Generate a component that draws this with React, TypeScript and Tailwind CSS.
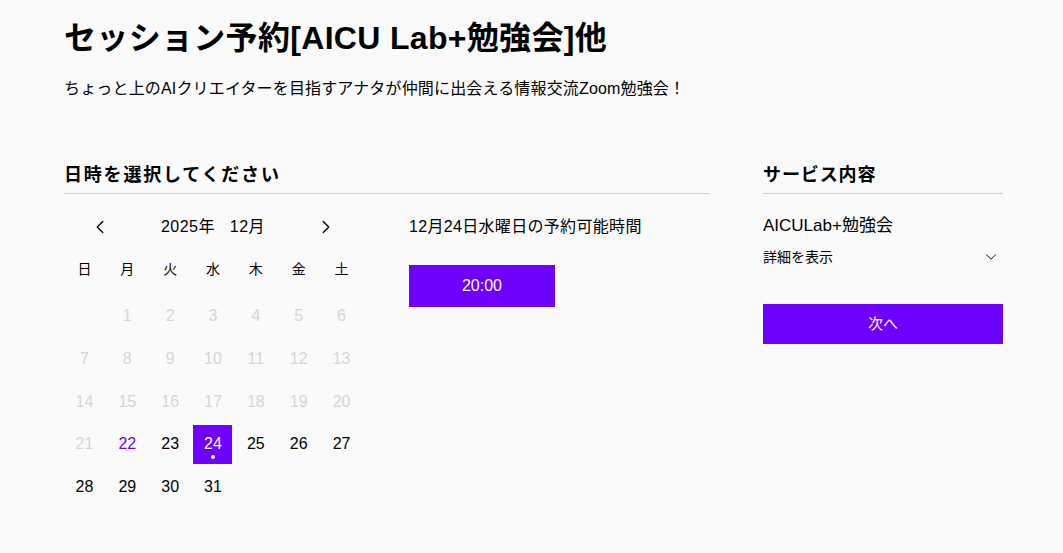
import React from 'react';
import { ChevronLeft, ChevronRight, ChevronDown } from 'lucide-react';

const font = { fontFamily: '"Liberation Sans", "Noto Sans CJK JP", sans-serif' };

const weekdays = ['日', '月', '火', '水', '木', '金', '土'];

type Day = { n: number | null; state: 'past' | 'open' | 'today' | 'selected' | 'empty' };

const buildDays = (): Day[] => {
  const days: Day[] = [{ n: null, state: 'empty' }];
  for (let i = 1; i <= 31; i++) {
    let state: Day['state'] = 'past';
    if (i === 22) state = 'today';
    else if (i === 24) state = 'selected';
    else if (i > 22) state = 'open';
    days.push({ n: i, state });
  }
  return days;
};

const DayCell: React.FC<{ day: Day }> = ({ day }) => {
  if (day.n === null) return <div className="h-[39px]" />;
  if (day.state === 'selected') {
    return (
      <div className="flex justify-center">
        <div className="relative flex h-[39px] w-[39px] items-center justify-center bg-[#6f00ff] text-white">
          {day.n}
          <span className="absolute bottom-[5px] left-1/2 h-[4px] w-[4px] -translate-x-1/2 rounded-full bg-white" />
        </div>
      </div>
    );
  }
  const color =
    day.state === 'past' ? 'text-[#d4d4d4]' : day.state === 'today' ? 'text-[#6f00ff]' : 'text-black';
  return <div className={`flex h-[39px] items-center justify-center ${color}`}>{day.n}</div>;
};

export default function App() {
  const days = buildDays();
  return (
    <div className="min-h-[553px] w-full bg-[#fafafa] text-black" style={font}>
      <div className="pl-16 pt-[18px]">
        <h1 className="text-[32px] font-bold leading-[40px] tracking-[0.01em]">セッション予約[AICU Lab+勉強会]他</h1>
        <p className="mt-[20px] text-[16px] leading-[22px] tracking-[0.01em]">
          ちょっと上のAIクリエイターを目指すアナタが仲間に出会える情報交流Zoom勉強会！
        </p>

        <div className="mt-[63px] flex gap-[53px]">
          {/* left: date/time */}
          <section className="w-[646px] shrink-0">
            <h2 className="pb-[6px] text-[18px] font-bold leading-[24px] tracking-[0.1em]">日時を選択してください</h2>
            <div className="h-px bg-[#cfcfcf]" />

            <div className="mt-[20px] flex">
              <div className="-ml-px w-[300px] shrink-0">
                <div className="flex h-[26px] items-center justify-between pl-[26px] pr-[26px] text-[16px]">
                  <ChevronLeft className="h-[22px] w-[22px]" strokeWidth={1.5} />
                  <span className="tracking-[0.03em]">2025年&nbsp;&nbsp;&nbsp;12月</span>
                  <ChevronRight className="h-[22px] w-[22px]" strokeWidth={1.5} />
                </div>
                <div className="mt-[19px] grid grid-cols-7 text-[14px]">
                  {weekdays.map((w) => (
                    <div key={w} className="flex h-[20px] items-center justify-center">
                      {w}
                    </div>
                  ))}
                </div>
                <div className="mt-[17.5px] grid grid-cols-7 gap-y-[3.75px] text-[16px]">
                  {days.map((d, i) => (
                    <DayCell key={i} day={d} />
                  ))}
                </div>
              </div>

              <div className="ml-[46px]">
                <div className="flex h-[26px] items-center text-[16px] tracking-[0.02em]">12月24日水曜日の予約可能時間</div>
                <button className="mt-[25px] flex h-[42px] w-[146px] items-center justify-center bg-[#6f00ff] text-[16px] text-white">
                  20:00
                </button>
              </div>
            </div>
          </section>

          {/* right: service */}
          <section className="w-[240px] shrink-0">
            <h2 className="pb-[6px] text-[18px] font-bold leading-[24px] tracking-[0.05em]">サービス内容</h2>
            <div className="h-px bg-[#cfcfcf]" />
            <div className="mt-[21px] text-[17px] leading-[22px]">AICULab+勉強会</div>
            <div className="mt-[10px] flex items-center justify-between text-[14px] leading-[20px]">
              <span>詳細を表示</span>
              <ChevronDown className="mr-[3px] h-[18px] w-[18px]" strokeWidth={1.25} />
            </div>
            <button className="mt-[37px] flex h-[40px] w-full items-center justify-center bg-[#6f00ff] text-[15px] text-white">
              次へ
            </button>
          </section>
        </div>
      </div>
    </div>
  );
}
